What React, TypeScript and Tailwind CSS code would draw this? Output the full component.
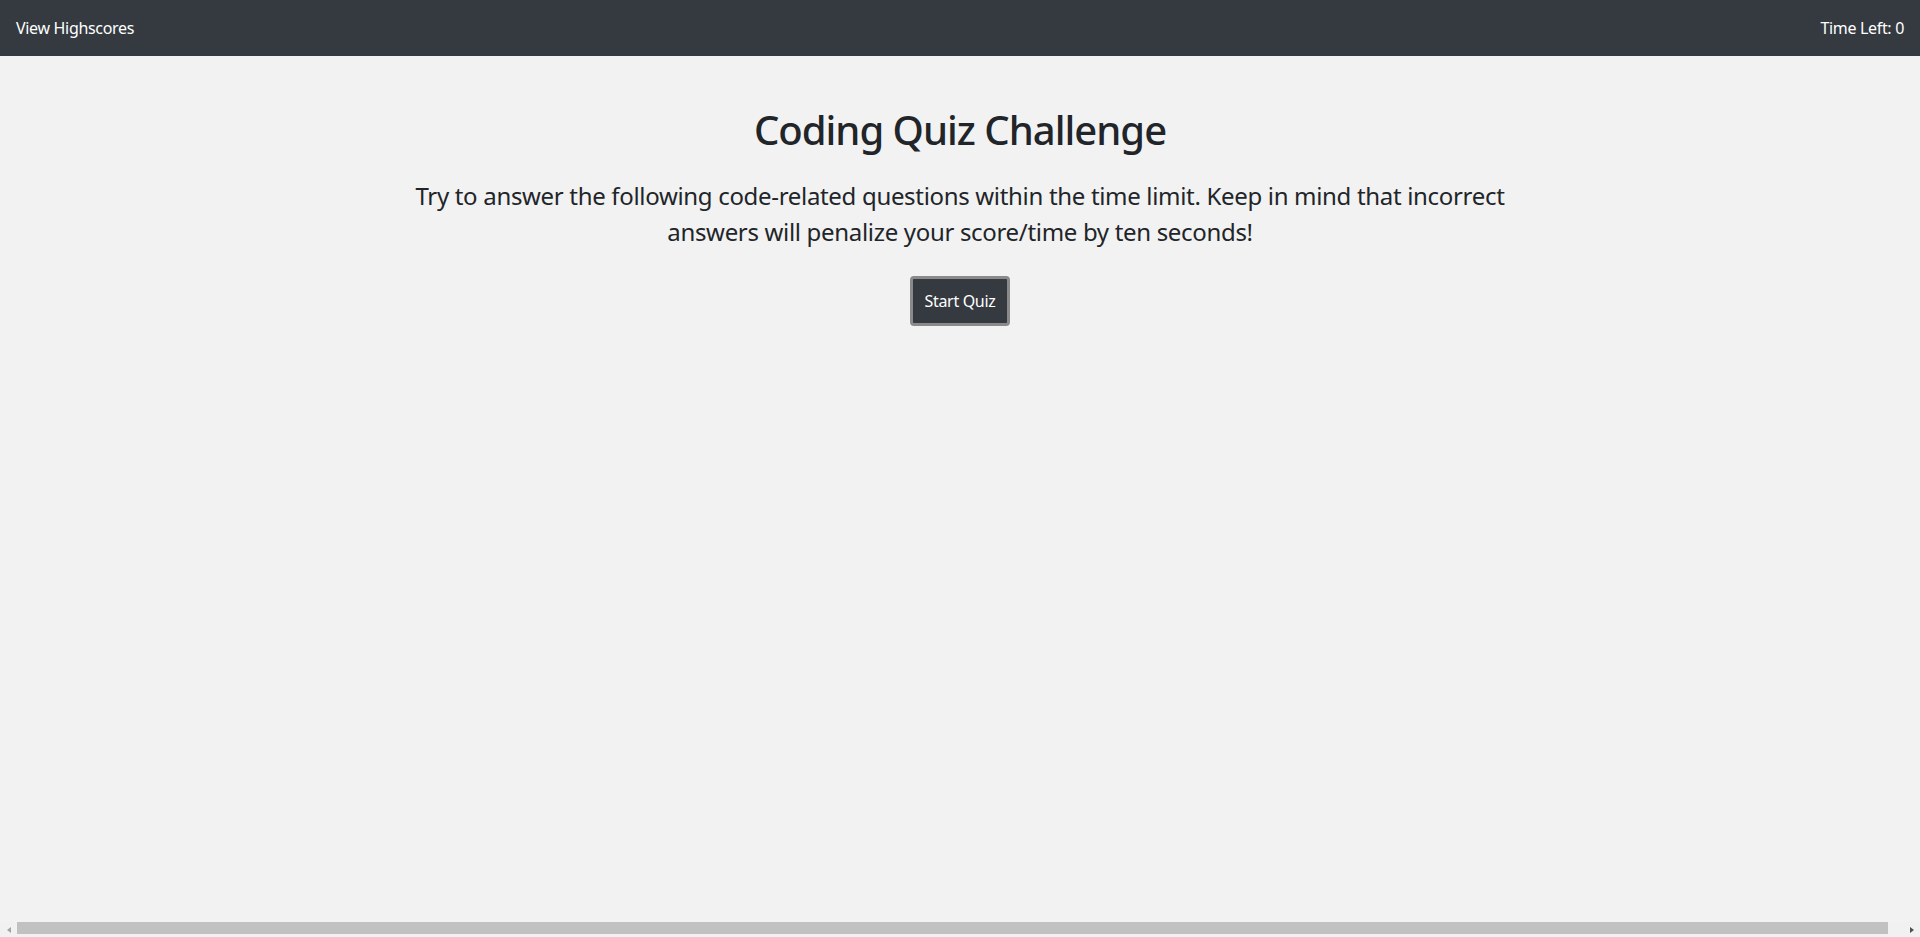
import React from 'react';

// classic browser scrollbar seen at the bottom of the screenshot
function HScrollbar() {
  return (
    <div className="fixed bottom-0 left-0 right-0 h-[15px] bg-[#f1f1f1] flex items-center">
      <div className="w-[17px] h-full flex items-center justify-center">
        <div className="w-0 h-0 border-y-[3px] border-y-transparent border-r-[4px] border-r-[#a3a3a3]" />
      </div>
      <div className="h-[12px] self-start w-[1871px] bg-[#c1c1c1]" />
      <div className="flex-1 h-full flex items-center justify-end pr-[6px]">
        <div className="w-0 h-0 border-y-[3px] border-y-transparent border-l-[4px] border-l-[#505050]" />
      </div>
    </div>
  );
}

export default function App() {
  return (
    <div className="min-h-screen bg-[#f2f2f2] text-[#212529] font-['Noto_Sans',sans-serif] tracking-[-0.02em]">
      <header className="h-14 bg-[#343a40] text-white flex items-center justify-between px-4 text-base">
        <a href="#" className="text-white">View Highscores</a>
        <span>Time Left: 0</span>
      </header>

      <main>
        <div className="mx-auto w-[1140px] px-[15px] pt-[50px] text-center">
          <h1 className="text-[40px] leading-[1.2] font-medium tracking-[-0.025em] mb-[24px]">Coding Quiz Challenge</h1>
          <p className="text-2xl leading-[1.5] mb-[26px]">
            Try to answer the following code-related questions within the time limit. Keep in mind that incorrect answers will penalize your score/time by ten seconds!
          </p>
          <button className="h-[50px] px-[12px] bg-[#343a40] text-white text-base rounded border-[3px] border-[#8a8a8a]">
            Start Quiz
          </button>
        </div>
      </main>

      <HScrollbar />
    </div>
  );
}
